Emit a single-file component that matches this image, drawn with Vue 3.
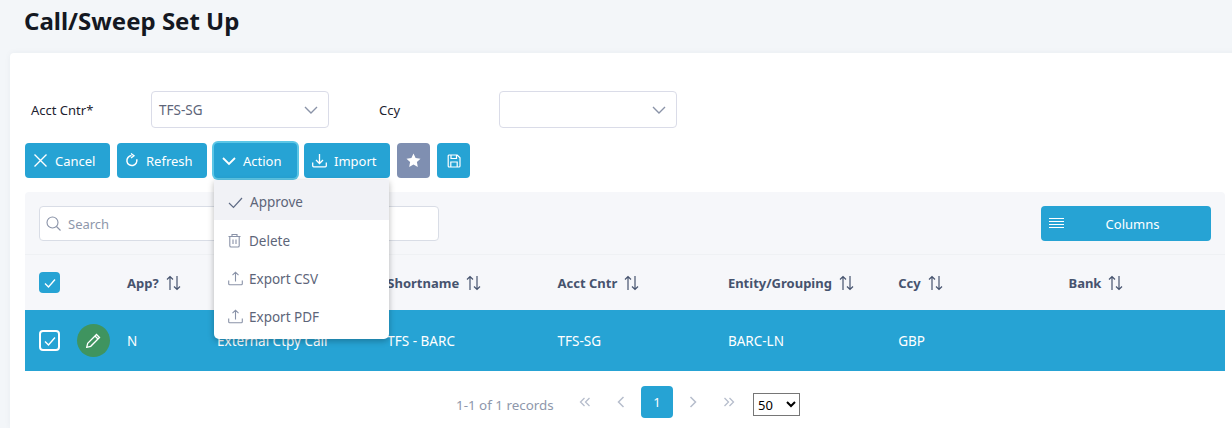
<script setup>
const cols = ['App?', 'Type', 'Shortname', 'Acct Cntr', 'Entity/Grouping', 'Ccy', 'Bank']
const cells = ['N', 'External Ctpy Call', 'TFS - BARC', 'TFS-SG', 'BARC-LN', 'GBP', '']
</script>

<template>
  <div class="page">
    <h1 class="title">Call/Sweep Set Up</h1>
    <section class="card">
      <div class="form">
        <label class="lbl first">Acct Cntr*</label>
        <div class="select">
          <span>TFS-SG</span>
          <svg class="chev" width="14" height="14" viewBox="0 0 14 14"><path d="M1 4l6 6 6-6" fill="none" stroke="#8a93a8" stroke-width="1.4"/></svg>
        </div>
        <label class="lbl second">Ccy</label>
        <div class="select">
          <span></span>
          <svg class="chev" width="14" height="14" viewBox="0 0 14 14"><path d="M1 4l6 6 6-6" fill="none" stroke="#8a93a8" stroke-width="1.4"/></svg>
        </div>
      </div>

      <div class="actions">
        <button class="btn w85">
          <svg width="15" height="15" viewBox="0 0 15 15"><path d="M1.5 1.5l12 12M13.5 1.5l-12 12" stroke="#fff" stroke-width="1.4" fill="none"/></svg>
          Cancel
        </button>
        <button class="btn w90">
          <svg width="14" height="15" viewBox="0 0 14 15"><path d="M6.5 2.6a5 5 0 1 0 5.2 3.6" stroke="#fff" stroke-width="1.5" fill="none"/><path d="M6 .5l3 2.2-3 2.2" stroke="#fff" stroke-width="1.3" fill="none"/></svg>
          Refresh
        </button>
        <div class="menuwrap">
          <button class="btn w83 focus">
            <svg width="14" height="14" viewBox="0 0 14 14"><path d="M1 4l6 6 6-6" stroke="#fff" stroke-width="1.8" fill="none"/></svg>
            Action
          </button>
          <div class="menu">
            <div class="item hot">
              <svg width="15" height="15" viewBox="0 0 15 15"><path d="M1 8l4.500 4.500L14 3" stroke="#5f6b85" stroke-width="1.2" fill="none"/></svg>
              <span>Approve</span>
            </div>
            <div class="item">
              <svg width="15" height="15" viewBox="1 0 15 15"><path d="M1.500 3.500h12M5 3.500V1.500h5v2M2.800 3.500v9.200a1.300 1.300 0 0 0 1.300 1.300h6.800a1.300 1.300 0 0 0 1.300-1.300V3.500M6 6.500v4.500M9 6.500v4.500" stroke="#8a93a8" stroke-width="1.100" fill="none"/></svg>
              <span>Delete</span>
            </div>
            <div class="item">
              <svg width="15" height="15" viewBox="0 0 15 15"><path d="M.7 9.500v3.300a1 1 0 0 0 1 1h11.600a1 1 0 0 0 1-1V9.500M7.500 10.500V1.200M4.500 4.200l3-3 3 3" stroke="#8a93a8" stroke-width="1.100" fill="none"/></svg>
              <span>Export CSV</span>
            </div>
            <div class="item">
              <svg width="15" height="15" viewBox="0 0 15 15"><path d="M.7 9.500v3.300a1 1 0 0 0 1 1h11.600a1 1 0 0 0 1-1V9.500M7.500 10.500V1.200M4.500 4.200l3-3 3 3" stroke="#8a93a8" stroke-width="1.100" fill="none"/></svg>
              <span>Export PDF</span>
            </div>
          </div>
        </div>
        <button class="btn w86">
          <svg width="15" height="15" viewBox="0 0 15 15"><path d="M.7 9.500v3.300a1 1 0 0 0 1 1h11.600a1 1 0 0 0 1-1V9.500M7.500 1v9.500M4 7l3.500 3.500L11 7" stroke="#fff" stroke-width="1.300" fill="none"/></svg>
          Import
        </button>
        <button class="btn icon grey">
          <svg width="15" height="15" viewBox="0 0 15 15"><path d="M7.500.6l2.100 4.500 4.900.6-3.600 3.400.9 4.900-4.300-2.400-4.300 2.400.9-4.900L.5 5.700l4.900-.6z" fill="#fff"/></svg>
        </button>
        <button class="btn icon">
          <svg width="14" height="14" viewBox="0 0 14 14"><path d="M2.200 1h8l2.800 2.800v8.200a1 1 0 0 1-1 1H2.200a1 1 0 0 1-1-1V2a1 1 0 0 1 1-1zM4 1v3.500h5.500V1M3.800 13V8h6.400v5" stroke="#fff" stroke-width="1.200" fill="none"/></svg>
        </button>
      </div>

      <div class="panel">
        <div class="toolbar">
          <div class="search">
            <svg width="15" height="15" viewBox="0 0 15 15"><circle cx="6.500" cy="6.500" r="5.500" stroke="#8a93a8" stroke-width="1.100" fill="none"/><path d="M10.500 10.500l4 4" stroke="#8a93a8" stroke-width="1.100"/></svg>
            <span>Search</span>
          </div>
          <button class="colbtn">
            <svg width="15" height="13" viewBox="0 0 15 13"><path d="M0 1.500h15M0 4.500h15M0 7.500h15M0 10.500h15" stroke="#fff" stroke-width="1.200"/></svg>
            <span>Columns</span>
          </button>
        </div>

        <div class="thead grid">
          <div class="lead">
            <span class="box on">
              <svg width="14" height="14" viewBox="0 0 14 14"><path d="M2 7.500l3.500 3.500L12 3.500" stroke="#fff" stroke-width="1.400" fill="none"/></svg>
            </span>
          </div>
          <div v-for="c in cols" :key="c" class="th">
            <span>{{ c }}</span>
            <svg width="15" height="16" viewBox="0 0 15 16"><path d="M4 15V1.500M1 4.500l3-3 3 3M11 1v13.500M8 11.500l3 3 3-3" stroke="#46536e" stroke-width="1.200" fill="none"/></svg>
          </div>
        </div>

        <div class="row grid">
          <div class="lead">
            <span class="box out">
              <svg width="14" height="14" viewBox="0 0 14 14"><path d="M2 7.500l3.500 3.500L12 3.500" stroke="#fff" stroke-width="1.400" fill="none"/></svg>
            </span>
            <span class="edit">
              <svg width="15" height="15" viewBox="0 0 15 15"><path d="M10.500 1.500l3 3-8.800 8.800-4 1 1-4zM9 3l3 3" stroke="#fff" stroke-width="1.300" fill="none"/></svg>
            </span>
          </div>
          <div v-for="(c, i) in cells" :key="i" class="td">{{ c }}</div>
        </div>
      </div>

      <div class="pager">
        <span class="count">1-1 of 1 records</span>
        <span class="pg"><svg width="12" height="10" viewBox="0 0 12 10"><path d="M5.500 1l-4 4 4 4M10.500 1l-4 4 4 4" stroke="#b6bdcc" stroke-width="1.300" fill="none"/></svg></span>
        <span class="pg"><svg width="8" height="12" viewBox="0 0 8 12"><path d="M6.500 1l-5 5 5 5" stroke="#b6bdcc" stroke-width="1.500" fill="none"/></svg></span>
        <span class="cur">1</span>
        <span class="pg"><svg width="8" height="12" viewBox="0 0 8 12"><path d="M1.500 1l5 5-5 5" stroke="#b6bdcc" stroke-width="1.500" fill="none"/></svg></span>
        <span class="pg"><svg width="12" height="10" viewBox="0 0 12 10"><path d="M1.500 1l4 4-4 4M6.500 1l4 4-4 4" stroke="#b6bdcc" stroke-width="1.300" fill="none"/></svg></span>
        <select class="size"><option>50</option></select>
      </div>
    </section>
  </div>
</template>

<style>
html, body { margin: 0; overflow: hidden; }
</style>

<style scoped>
.page {
  width: 1232px;
  height: 428px;
  overflow: hidden;
  background: #f3f6f9;
  font-family: "Noto Sans", "Open Sans", sans-serif;
  font-size: 13px;
  color: #1c2230;
}
.title {
  margin: 0;
  padding: 4px 0 0 24px;
  height: 53px;
  box-sizing: border-box;
  font-size: 24px;
  line-height: 33px;
  font-weight: 700;
  color: #141822;
}
.card {
  margin-left: 10px;
  width: 1240px;
  height: 375px;
  background: #fff;
  border-radius: 4px 0 0 0;
  box-shadow: 0 0 6px rgba(30, 50, 80, .05);
  box-sizing: border-box;
  padding: 38px 0 0 15px;
}
.form { display: flex; align-items: center; height: 37px; }
.lbl { display: block; }
.first { margin-left: 6px; width: 120px; }
.second { margin-left: 50px; width: 120px; }
.select {
  width: 178px;
  height: 37px;
  box-sizing: border-box;
  border: 1px solid #dadce8;
  border-radius: 4px;
  padding: 0 10px 0 7px;
  display: flex;
  align-items: center;
  justify-content: space-between;
  color: #5d6579;
  background: #fff;
  font-size: 13.5px;
}
.actions { display: flex; gap: 7px; margin-top: 15px; height: 35px; }
.btn {
  height: 35px;
  box-sizing: border-box;
  border: 0;
  border-radius: 4px;
  background: #26a3d4;
  color: #fff;
  font: inherit;
  padding: 0 0 0 8px;
  display: flex;
  align-items: center;
  gap: 7px;
  text-align: left;
}
.w85 { width: 85px; }
.w90 { width: 90px; }
.w83 { width: 83px; }
.w86 { width: 86px; }
.focus { box-shadow: 0 0 0 2px #5cc6e6; }
.icon { width: 33px; padding: 0; justify-content: center; }
.grey { background: #7f8fb1; }
.menuwrap { position: relative; }
.menu {
  position: absolute;
  top: 37px;
  left: 0;
  width: 175px;
  height: 159px;
  background: #fff;
  border-radius: 0 0 5px 5px;
  box-shadow: 0 2px 6px rgba(0, 0, 0, .28);
  z-index: 5;
  font-size: 13.5px;
}
.item {
  height: 38px;
  box-sizing: border-box;
  padding: 3px 0 0 14px;
  display: flex;
  align-items: center;
  gap: 6px;
  color: #5d6579;
}
.hot { background: #f1f2f6; height: 40px; padding-top: 4px; gap: 7px; }
.panel {
  margin-top: 14px;
  width: 1200px;
  background: #f6f7fa;
  border-radius: 4px 4px 0 0;
}
.toolbar {
  height: 63px;
  box-sizing: border-box;
  border-bottom: 1px solid #eff1f4;
  padding: 14px 14px 0;
  display: flex;
  justify-content: space-between;
  align-items: flex-start;
}
.search {
  width: 400px;
  height: 35px;
  box-sizing: border-box;
  border: 1px solid #d9dde6;
  border-radius: 4px;
  background: #fff;
  display: flex;
  align-items: center;
  gap: 7px;
  padding-left: 6px;
  color: #8e97ab;
}
.colbtn {
  width: 170px;
  height: 35px;
  border: 0;
  border-radius: 4px;
  background: #26a3d4;
  color: #fff;
  font: inherit;
  padding: 0 0 0 8px;
  display: flex;
  align-items: center;
}
.colbtn span { flex: 1; text-align: center; padding-right: 15px; padding-left: 5px; }
.grid {
  display: grid;
  grid-template-columns: 102px 90px repeat(5, 170.3px) 1fr;
  align-items: center;
}
.thead { height: 55px; }
.lead { display: flex; align-items: center; padding-left: 14px; gap: 17px; }
.box {
  width: 21px;
  height: 21px;
  box-sizing: border-box;
  border-radius: 4px;
  display: flex;
  align-items: center;
  justify-content: center;
}
.on { background: #26a3d4; }
.out { border: 2px solid #fff; }
.th {
  display: flex;
  align-items: center;
  gap: 7px;
  font-weight: 700;
  color: #46536e;
}
.row { height: 61px; background: #26a3d4; color: #fff; font-size: 13.5px; }
.edit {
  width: 33px;
  height: 33px;
  border-radius: 50%;
  background: #3f945f;
  display: flex;
  align-items: center;
  justify-content: center;
}
.td { white-space: nowrap; }
.pager {
  display: flex;
  align-items: center;
  margin-top: 15px;
  padding-left: 431px;
  height: 32px;
  color: #8e97ab;
}
.count { width: 111px; font-size: 13.4px; padding-top: 5px; white-space: nowrap; }
.pg { width: 36px; display: flex; justify-content: center; }
.cur {
  width: 32px;
  height: 32px;
  border-radius: 4px;
  background: #26a3d4;
  color: #fff;
  display: flex;
  align-items: center;
  justify-content: center;
  margin: 0 2px;
}
.size {
  margin: 5px 0 0 6px;
  width: 47px;
  height: 23px;
  font-family: "Noto Sans", sans-serif;
  font-size: 13px;
  background: #fff;
  color: #000;
  border: 1px solid #767676;
}
</style>
